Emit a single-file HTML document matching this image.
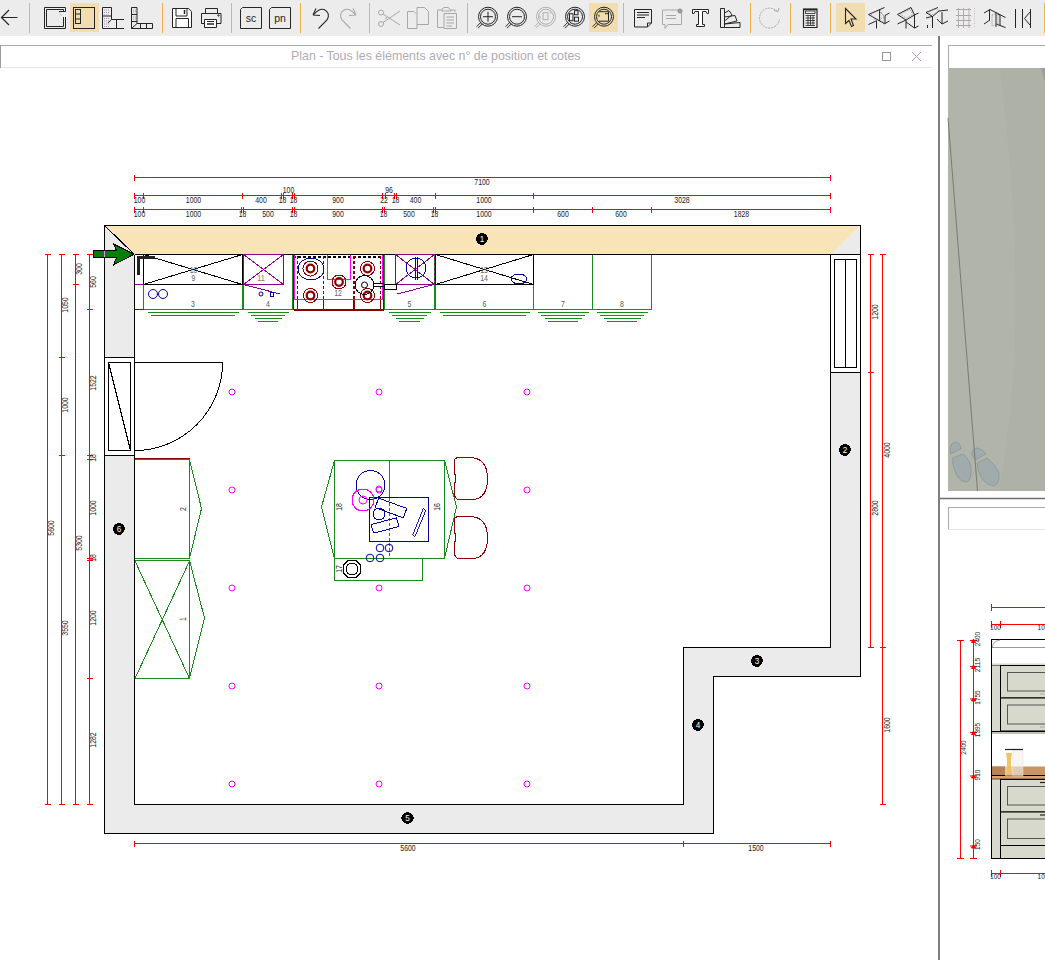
<!DOCTYPE html>
<html><head><meta charset="utf-8"><style>
html,body{margin:0;padding:0;background:#fff;width:1045px;height:960px;overflow:hidden}
svg{display:block;font-family:"Liberation Sans",sans-serif}
.ce line,.ce rect,.ce path,.ce polygon,.ce polyline,.ce circle,.ce ellipse{shape-rendering:crispEdges}
</style></head><body>
<svg width="1045" height="960" viewBox="0 0 1045 960">
<rect x="0" y="0" width="1045" height="36" fill="#ececec" stroke="none" stroke-width="1" />
<line x1="0" y1="36.5" x2="1045" y2="36.5" stroke="#a0a0a0" stroke-width="1" />
<line x1="29.5" y1="3" x2="29.5" y2="33" stroke="#f0b440" stroke-width="1" />
<line x1="162.5" y1="3" x2="162.5" y2="33" stroke="#f0b440" stroke-width="1" />
<line x1="231.5" y1="3" x2="231.5" y2="33" stroke="#f0b440" stroke-width="1" />
<line x1="300.5" y1="3" x2="300.5" y2="33" stroke="#f0b440" stroke-width="1" />
<line x1="369.5" y1="3" x2="369.5" y2="33" stroke="#f0b440" stroke-width="1" />
<line x1="467.5" y1="3" x2="467.5" y2="33" stroke="#f0b440" stroke-width="1" />
<line x1="623.5" y1="3" x2="623.5" y2="33" stroke="#f0b440" stroke-width="1" />
<line x1="750.5" y1="3" x2="750.5" y2="33" stroke="#f0b440" stroke-width="1" />
<line x1="790.5" y1="3" x2="790.5" y2="33" stroke="#f0b440" stroke-width="1" />
<line x1="830.5" y1="3" x2="830.5" y2="33" stroke="#f0b440" stroke-width="1" />
<line x1="1044.5" y1="3" x2="1044.5" y2="33" stroke="#f0b440" stroke-width="1" />
<rect x="70" y="3" width="29" height="29" fill="#f2ddb0" stroke="none" stroke-width="1" />
<rect x="589" y="3" width="29" height="29" fill="#f2ddb0" stroke="none" stroke-width="1" />
<rect x="836" y="3" width="29" height="29" fill="#f2ddb0" stroke="none" stroke-width="1" />
<path d="M17.5,17.5 L1.5,17.5 M9,10 L1.5,17.5 L9,25" fill="none" stroke="#252525" stroke-width="1.2" />
<path d="M44.5,7.5 L65.5,7.5 L65.5,11.5 L59,11.5 M46.5,26.5 L63.5,26.5 L63.5,17 M44.5,7.5 L44.5,28.5 L65.5,28.5 L65.5,17 M46.5,9.5 L63.5,9.5 L63.5,11 M46.5,9.5 L46.5,26.5" fill="none" stroke="#252525" stroke-width="1" />
<path d="M59,12.5 L62,16" fill="none" stroke="#c08050" stroke-width="0.8" stroke-dasharray="1,1"/>
<rect x="73.5" y="7.5" width="21" height="21" fill="none" stroke="#252525" stroke-width="1" />
<rect x="75.5" y="9.5" width="5" height="14" fill="none" stroke="#252525" stroke-width="1" />
<line x1="75.5" y1="14" x2="80.5" y2="14" stroke="#252525" stroke-width="1" />
<line x1="75.5" y1="19" x2="80.5" y2="19" stroke="#252525" stroke-width="1" />
<path d="M102.5,28.5 L102.5,7.5 L111.5,7.5 L111.5,19.5 L124,19.5 M102.5,16 L111.5,16 M102.5,28.5 L124,28.5 M116.5,19.5 L116.5,28.5 M108,23 L111.5,19.5" fill="none" stroke="#252525" stroke-width="1" />
<line x1="104" y1="10" x2="110" y2="10" stroke="#8a7a90" stroke-width="0.8" stroke-dasharray="1,1"/>
<line x1="104" y1="12.5" x2="110" y2="12.5" stroke="#8a7a90" stroke-width="0.8" stroke-dasharray="1,1"/>
<line x1="104" y1="15" x2="110" y2="15" stroke="#8a7a90" stroke-width="0.8" stroke-dasharray="1,1"/>
<line x1="104" y1="18.5" x2="110" y2="18.5" stroke="#8a7a90" stroke-width="0.8" stroke-dasharray="1,1"/>
<line x1="104" y1="21" x2="110" y2="21" stroke="#8a7a90" stroke-width="0.8" stroke-dasharray="1,1"/>
<line x1="104" y1="24" x2="110" y2="24" stroke="#8a7a90" stroke-width="0.8" stroke-dasharray="1,1"/>
<line x1="104" y1="26.5" x2="110" y2="26.5" stroke="#8a7a90" stroke-width="0.8" stroke-dasharray="1,1"/>
<path d="M131.5,28.5 L131.5,7.5 L137,7.5 L137,23.5 L152.5,23.5 L152.5,28.5 L131.5,28.5 M131.5,14.5 L137,14.5 M131.5,21.5 L137,21.5 M131.5,28.5 L137,23.5 M140.5,23.5 L140.5,28.5 M146.5,23.5 L146.5,28.5" fill="none" stroke="#252525" stroke-width="1" />
<line x1="133" y1="10" x2="136" y2="10" stroke="#8a7a90" stroke-width="0.8" stroke-dasharray="1,1"/>
<line x1="133" y1="12" x2="136" y2="12" stroke="#8a7a90" stroke-width="0.8" stroke-dasharray="1,1"/>
<line x1="133" y1="17" x2="136" y2="17" stroke="#8a7a90" stroke-width="0.8" stroke-dasharray="1,1"/>
<line x1="133" y1="19" x2="136" y2="19" stroke="#8a7a90" stroke-width="0.8" stroke-dasharray="1,1"/>
<path d="M172.5,8.5 L188.5,8.5 L191.5,11.5 L191.5,27.5 L172.5,27.5 Z" fill="#fff" stroke="#252525" stroke-width="1" />
<path d="M176,8.5 L176,16 L187,16 L187,8.5" fill="none" stroke="#252525" stroke-width="1" />
<path d="M184.5,10 L184.5,14" fill="none" stroke="#252525" stroke-width="1.5" />
<path d="M176,27.5 L176,18.5 L188.5,18.5 L188.5,27.5" fill="none" stroke="#252525" stroke-width="1" />
<path d="M205.5,13 L205.5,8.5 L217.5,8.5 L217.5,13" fill="none" stroke="#252525" stroke-width="1" />
<path d="M201.5,13.5 L221,13.5 L221,23.5 L216.5,23.5 M204.5,23.5 L201.5,23.5 Z" fill="none" stroke="#252525" stroke-width="1" />
<path d="M201.5,13.5 L201.5,23.5" fill="none" stroke="#252525" stroke-width="1" />
<path d="M204.5,19.5 L216.5,19.5 L216.5,27.5 L204.5,27.5 Z" fill="#fff" stroke="#252525" stroke-width="1" />
<line x1="207" y1="21.5" x2="214" y2="21.5" stroke="#252525" stroke-width="1" />
<line x1="207" y1="24" x2="214" y2="24" stroke="#252525" stroke-width="1.5" />
<circle cx="218.5" cy="15.5" r="0.7" fill="none" stroke="#252525" stroke-width="1"  style="shape-rendering:auto"/>
<path d="M242.5,7.5 L261.5,7.5 L261.5,28.5 L240.5,28.5 L240.5,9.5 Z" fill="none" stroke="#252525" stroke-width="1" />
<text x="251.0" y="22" text-anchor="middle" font-size="10.5" fill="#252525">sc</text>
<path d="M271.5,7.5 L290.5,7.5 L290.5,28.5 L269.5,28.5 L269.5,9.5 Z" fill="none" stroke="#252525" stroke-width="1" />
<text x="280.0" y="22" text-anchor="middle" font-size="10.5" fill="#252525">pn</text>
<path d="M313,15 L316,8.5 M313,15 L320,15.5" fill="none" stroke="#252525" stroke-width="1.1" />
<path d="M313.5,15 Q319,8 324,9.5 Q331,13 327,20 L318.5,28.5" fill="none" stroke="#252525" stroke-width="1.1" />
<path d="M356,15 L353,8.5 M356,15 L349,15.5" fill="none" stroke="#a8a8a8" stroke-width="1.1" />
<path d="M355.5,15 Q350,8 345,9.5 Q338,13 342,20 L350.5,28.5" fill="none" stroke="#a8a8a8" stroke-width="1.1" />
<circle cx="381" cy="12.5" r="2.5" fill="none" stroke="#a8a8a8" stroke-width="1"  style="shape-rendering:auto"/>
<circle cx="381" cy="24" r="2.5" fill="none" stroke="#a8a8a8" stroke-width="1"  style="shape-rendering:auto"/>
<path d="M383,14 L400,25 M383,22.5 L400,11 M386,17 L386,19" fill="none" stroke="#a8a8a8" stroke-width="1" />
<path d="M407.5,11.5 L414,11.5 L417,14.5 L417,28.5 L407.5,28.5 Z M417,14 L417,7.5 L424.5,7.5 L428.5,11.5 L428.5,24.5 L417,24.5" fill="none" stroke="#a8a8a8" stroke-width="1" />
<path d="M437.5,10 L442,10 M451,10 L455,10 L455,12 M437.5,10 L437.5,27.5 L444,27.5 M442,9 L444,7.5 L448,7.5 L450,9 L451,11 L442,11 Z" fill="none" stroke="#a8a8a8" stroke-width="1" />
<path d="M444,13.5 L456.5,13.5 L456.5,28.5 L444,28.5 Z M446.5,17 L454,17 M446.5,20 L454,20 M446.5,23 L454,23 M446.5,26 L452,26" fill="none" stroke="#a8a8a8" stroke-width="1" />
<circle cx="488" cy="16.7" r="9.5" fill="none" stroke="#252525" stroke-width="1" />
<circle cx="488" cy="16.7" r="7.5" fill="none" stroke="#252525" stroke-width="1" />
<path d="M476.5,26.7 L481,22.2 M478,28.2 L482.5,23.7" fill="none" stroke="#252525" stroke-width="1" />
<path d="M483,16.7 L493,16.7 M488,11.7 L488,21.7" fill="none" stroke="#252525" stroke-width="1" />
<circle cx="517" cy="16.7" r="9.5" fill="none" stroke="#252525" stroke-width="1" />
<circle cx="517" cy="16.7" r="7.5" fill="none" stroke="#252525" stroke-width="1" />
<path d="M505.5,26.7 L510,22.2 M507,28.2 L511.5,23.7" fill="none" stroke="#252525" stroke-width="1" />
<path d="M512,16.7 L522,16.7" fill="none" stroke="#252525" stroke-width="1" />
<circle cx="546" cy="16.7" r="9.5" fill="none" stroke="#b0b0b0" stroke-width="1" />
<circle cx="546" cy="16.7" r="7.5" fill="none" stroke="#b0b0b0" stroke-width="1" />
<path d="M534.5,26.7 L539,22.2 M536,28.2 L540.5,23.7" fill="none" stroke="#b0b0b0" stroke-width="1" />
<rect x="543" y="12.7" width="5" height="7" fill="none" stroke="#b0b0b0" stroke-width="1" />
<path d="M540,15.7 L540,18.7 M550,11.7 L552,13.7" fill="none" stroke="#b0b0b0" stroke-width="1" />
<circle cx="575" cy="16.7" r="9.5" fill="none" stroke="#252525" stroke-width="1" />
<circle cx="575" cy="16.7" r="7.5" fill="none" stroke="#252525" stroke-width="1" />
<path d="M563.5,26.7 L568,22.2 M565,28.2 L569.5,23.7" fill="none" stroke="#252525" stroke-width="1" />
<rect x="569.5" y="13.7" width="3.5" height="7" fill="none" stroke="#252525" stroke-width="1" />
<rect x="574.5" y="10.7" width="3.5" height="4" fill="none" stroke="#252525" stroke-width="1" />
<rect x="574.5" y="17.2" width="4" height="4" fill="none" stroke="#252525" stroke-width="1" />
<circle cx="604" cy="16.7" r="9.5" fill="none" stroke="#252525" stroke-width="1" />
<circle cx="604" cy="16.7" r="7.5" fill="none" stroke="#252525" stroke-width="1" />
<path d="M592.5,26.7 L597,22.2 M594,28.2 L598.5,23.7" fill="none" stroke="#252525" stroke-width="1" />
<path d="M599,11.7 L608.5,11.7 L608.5,21.2 L599,21.2 M599,14.7 L599,16.7 M605,13.7 L608,13.7" fill="none" stroke="#252525" stroke-width="1" />
<path d="M634.5,9.5 L651.5,9.5 L651.5,23 L647.5,27 L634.5,27 Z M647.5,27 L647.5,23 L651.5,23" fill="none" stroke="#252525" stroke-width="1" />
<path d="M637,12.5 L649,12.5 M637,15 L649,15 M637,17.5 L645,17.5" fill="none" stroke="#252525" stroke-width="1" />
<path d="M662.5,10 L681.5,10 L681.5,24.5 L668,24.5 L665,28.5 L665,24.5 L662.5,24.5 Z" fill="none" stroke="#a8a8a8" stroke-width="1" />
<line x1="666" y1="15.5" x2="676" y2="15.5" stroke="#a8a8a8" stroke-width="1" />
<line x1="666" y1="18.5" x2="676" y2="18.5" stroke="#a8a8a8" stroke-width="1" />
<circle cx="680" cy="11" r="2.5" fill="#9a9a9a" stroke="none" stroke-width="1"  style="shape-rendering:auto"/>
<path d="M692.5,9.5 L708.5,9.5 L708.5,13.5 L707,13.5 L706,11.5 L702.5,11.5 L702.5,24.5 L704.5,24.5 L704.5,26.5 L696.5,26.5 L696.5,24.5 L698.5,24.5 L698.5,11.5 L695,11.5 L694,13.5 L692.5,13.5 Z" fill="#fff" stroke="#252525" stroke-width="1" />
<path d="M720.5,8.5 L724.5,8.5 L724.5,27.5 L720.5,27.5 Z" fill="none" stroke="#252525" stroke-width="1" />
<path d="M724.5,13 L729,10.5 L732,15 L724.5,21 M724.5,17 L735,15.5 L737,21 L724.5,24 M724.5,24 L740,22.5 L740,27.5 L724.5,27.5" fill="none" stroke="#252525" stroke-width="1" />
<path d="M777.5,12 A10,10 0 1 0 779.5,19" fill="none" stroke="#a8a8a8" stroke-width="1" stroke-dasharray="2,1"/>
<path d="M774,10.5 L778,11.5 L779,8" fill="none" stroke="#a8a8a8" stroke-width="1" />
<path d="M803.5,9 L817,9 L817,27.5 L803.5,27.5 Z" fill="none" stroke="#252525" stroke-width="1.2" />
<line x1="803.5" y1="9.5" x2="817" y2="9.5" stroke="#252525" stroke-width="1.5" />
<rect x="805.5" y="11" width="9.5" height="2.5" fill="none" stroke="#252525" stroke-width="0.8" />
<path d="M805.5,15.5 L815,15.5 M805.5,18 L815,18 M805.5,20.5 L815,20.5 M805.5,23 L815,23 M805.5,25.5 L815,25.5 M808,15.5 L808,25.5 M810.5,15.5 L810.5,25.5 M813,15.5 L813,25.5" fill="none" stroke="#252525" stroke-width="0.8" />
<path d="M845.5,8.5 L856,19 L851,19 L853.5,25.5 L851.5,26.5 L849,20.5 L845.5,23.5 Z" fill="none" stroke="#252525" stroke-width="1.1" />
<path d="M868.5,14.5 L884.5,7.5 M868.5,14.5 L885,24 M879.5,9.5 L879.5,21 M885,15.5 L885,23.5 M885,15.5 L889.5,13 M885,23.5 L889.5,21 M868.5,24.5 L876,21 M876.5,20.5 L876.5,28.5" fill="none" stroke="#252525" stroke-width="1" />
<path d="M871,14 L880,10 L884,17 L876,21 Z M880,12 L884,16 L884,23 L880,20 Z" fill="none" stroke="#8a7a90" stroke-width="0.8" stroke-dasharray="1,1"/>
<path d="M897.5,14.5 L911,7.5 M897.5,14.5 L906,20 L914.5,15 M911,7.5 L914.5,15 M906,20 L906,28.5 M914.5,15 L914.5,28 M906,22 L914.5,28 M914.5,15 L918.5,13 M914.5,28 L918.5,26 M897.5,24 L906,20" fill="none" stroke="#252525" stroke-width="1" />
<path d="M900,14 L910,9.5 L913,14.5 L906,18 Z" fill="none" stroke="#8a7a90" stroke-width="0.8" stroke-dasharray="1,1"/>
<path d="M926,12.5 L938,7.5 M926,12.5 L932.5,16.5 L939,11 M932.5,16 L932.5,28 M926,18 L932,16.5 M939,11 L948,10 M942,12 L942,24 M937,19 L942,24 L948,21 M927.5,25 L927.5,28" fill="none" stroke="#252525" stroke-width="1" />
<path d="M928,12 L937,8.5 L939,11 L932,15 Z" fill="none" stroke="#8a7a90" stroke-width="0.8" stroke-dasharray="1,1"/>
<line x1="958.5" y1="8" x2="958.5" y2="28" stroke="#b8aab5" stroke-width="1" />
<line x1="963.5" y1="8" x2="963.5" y2="28" stroke="#b8aab5" stroke-width="1" />
<line x1="969" y1="8" x2="969" y2="28" stroke="#b8aab5" stroke-width="1" />
<line x1="956" y1="9.5" x2="971" y2="9.5" stroke="#a8a8a8" stroke-width="1" />
<line x1="956" y1="15.5" x2="971" y2="15.5" stroke="#a8a8a8" stroke-width="1" />
<line x1="956" y1="20.5" x2="971" y2="20.5" stroke="#a8a8a8" stroke-width="1" />
<line x1="956" y1="25.5" x2="971" y2="25.5" stroke="#a8a8a8" stroke-width="1" />
<line x1="974.5" y1="8" x2="974.5" y2="28" stroke="#c8b8c0" stroke-width="1" stroke-dasharray="1,1.5"/>
<path d="M984,13 L990,9.5 L1005.5,17.5 M984,24 L990,20 M989.5,9.5 L989.5,20 M996,12.5 L996,27 M996,24 L1005.5,27.5 M996,13 L1000,15 L1000,26" fill="none" stroke="#252525" stroke-width="1" />
<path d="M992,15 L998,13 L998,24 L992,26 Z" fill="none" stroke="#8a7a90" stroke-width="0.8" stroke-dasharray="1,1"/>
<path d="M1015.5,9 L1015.5,28 M1022.5,9 L1022.5,28 M1030.5,9 L1030.5,28 M1030,12 L1024.5,18.5 L1030,25" fill="none" stroke="#252525" stroke-width="1" />
<rect x="0" y="36" width="939" height="924" fill="#fff" stroke="none" stroke-width="1" />
<line x1="0" y1="45.5" x2="932" y2="45.5" stroke="#ababab" stroke-width="1" />
<line x1="0" y1="67.5" x2="932" y2="67.5" stroke="#e6e6e6" stroke-width="1" />
<line x1="0.5" y1="45" x2="0.5" y2="68" stroke="#9a9a9a" stroke-width="1" />
<text x="291" y="60" font-size="12.2" fill="#b0abb3" textLength="289.5" lengthAdjust="spacingAndGlyphs">Plan - Tous les éléments avec n° de position et cotes</text>
<rect x="882.5" y="52.5" width="8" height="8" fill="none" stroke="#999" stroke-width="1" />
<line x1="912" y1="52" x2="921" y2="61" stroke="#a99ab0" stroke-width="1" />
<line x1="921" y1="52" x2="912" y2="61" stroke="#a99ab0" stroke-width="1" />
<rect x="939" y="36" width="106" height="924" fill="#fff" stroke="none" stroke-width="1" />
<line x1="939" y1="36" x2="939" y2="960" stroke="#707070" stroke-width="1.8" />
<line x1="940" y1="498.5" x2="1045" y2="498.5" stroke="#6e6e6e" stroke-width="1.5" />
<line x1="948.5" y1="45.5" x2="1045" y2="45.5" stroke="#ababab" stroke-width="1" />
<line x1="948.5" y1="45" x2="948.5" y2="68" stroke="#ababab" stroke-width="1" />
<line x1="948.5" y1="507.5" x2="1045" y2="507.5" stroke="#ababab" stroke-width="1" />
<line x1="948.5" y1="507" x2="948.5" y2="530" stroke="#ababab" stroke-width="1" />
<line x1="948.5" y1="529.5" x2="1045" y2="529.5" stroke="#e6e6e6" stroke-width="1" />
<g class="ce">
<path d="M104.5,225.5 L860.5,225.5 L860.5,676.5 L713.5,676.5 L713.5,833.5 L104.5,833.5 Z M134.5,254.5 L830.5,254.5 L830.5,647.5 L683.5,647.5 L683.5,804.5 L134.5,804.5 Z" fill="#ebebeb" fill-rule="evenodd" stroke="#000" stroke-width="1"/>
<polygon points="104.5,225.5 860.5,225.5 830.5,254.5 134.5,254.5" fill="#f9e4b8" stroke="none" stroke-width="1" />
<line x1="104.5" y1="225.5" x2="860.5" y2="225.5" stroke="#000" stroke-width="1" />
<line x1="134.5" y1="254.5" x2="830.5" y2="254.5" stroke="#000" stroke-width="1" />
<line x1="104.5" y1="225.5" x2="134.5" y2="254.5" stroke="#000" stroke-width="1" />
<rect x="830.5" y="254.5" width="30" height="118" fill="#fff" stroke="#000" stroke-width="1" />
<rect x="834.5" y="259.5" width="22" height="108" fill="none" stroke="#000" stroke-width="1" />
<line x1="845.5" y1="259.5" x2="845.5" y2="367.5" stroke="#000" stroke-width="1" />
<rect x="104.5" y="357.5" width="30" height="98" fill="#fff" stroke="#000" stroke-width="1" />
<rect x="108.5" y="362.5" width="22" height="88" fill="none" stroke="#000" stroke-width="1" />
<line x1="108.5" y1="362.5" x2="130.5" y2="450.5" stroke="#000" stroke-width="1" />
<path d="M134.5,362.5 L222.5,362.5 A88,88 0 0 1 134.5,450.5" fill="none" stroke="#000" stroke-width="1"/>
<circle cx="482" cy="239" r="5.8" fill="#000" stroke="none" stroke-width="1" />
<path d="M480.8,232.9 h2.4 v12.2 h-2.4 Z M475.9,237.8 v2.4 h12.2 v-2.4 Z" fill="#000"/>
<text x="482" y="241.9" text-anchor="middle" font-size="8.2" fill="#fff">1</text>
<circle cx="845" cy="450" r="5.8" fill="#000" stroke="none" stroke-width="1" />
<path d="M843.8,443.9 h2.4 v12.2 h-2.4 Z M838.9,448.8 v2.4 h12.2 v-2.4 Z" fill="#000"/>
<text x="845" y="452.9" text-anchor="middle" font-size="8.2" fill="#fff">2</text>
<circle cx="757" cy="661" r="5.8" fill="#000" stroke="none" stroke-width="1" />
<path d="M755.8,654.9 h2.4 v12.2 h-2.4 Z M750.9,659.8 v2.4 h12.2 v-2.4 Z" fill="#000"/>
<text x="757" y="663.9" text-anchor="middle" font-size="8.2" fill="#fff">3</text>
<circle cx="698" cy="725" r="5.8" fill="#000" stroke="none" stroke-width="1" />
<path d="M696.8,718.9 h2.4 v12.2 h-2.4 Z M691.9,723.8 v2.4 h12.2 v-2.4 Z" fill="#000"/>
<text x="698" y="727.9" text-anchor="middle" font-size="8.2" fill="#fff">4</text>
<circle cx="407.5" cy="818" r="5.8" fill="#000" stroke="none" stroke-width="1" />
<path d="M406.3,811.9 h2.4 v12.2 h-2.4 Z M401.4,816.8 v2.4 h12.2 v-2.4 Z" fill="#000"/>
<text x="407.5" y="820.9" text-anchor="middle" font-size="8.2" fill="#fff">5</text>
<circle cx="119" cy="529" r="5.8" fill="#000" stroke="none" stroke-width="1" />
<path d="M117.8,522.9 h2.4 v12.2 h-2.4 Z M112.9,527.8 v2.4 h12.2 v-2.4 Z" fill="#000"/>
<text x="119" y="531.9" text-anchor="middle" font-size="8.2" fill="#fff">6</text>
<line x1="134.5" y1="177.5" x2="830.5" y2="177.5" stroke="#f00" stroke-width="1" />
<line x1="134.5" y1="174.5" x2="134.5" y2="180.5" stroke="#f00" stroke-width="1" />
<line x1="830.5" y1="174.5" x2="830.5" y2="180.5" stroke="#f00" stroke-width="1" />
<text x="482" y="182" text-anchor="middle" dominant-baseline="central" font-size="8.6" fill="#222" textLength="15.4" lengthAdjust="spacingAndGlyphs">7100</text>
<line x1="134.5" y1="195.5" x2="830.5" y2="195.5" stroke="#f00" stroke-width="1" />
<line x1="134.5" y1="192.5" x2="134.5" y2="198.5" stroke="#f00" stroke-width="1" />
<line x1="143.5" y1="192.5" x2="143.5" y2="198.5" stroke="#f00" stroke-width="1" />
<line x1="242.5" y1="192.5" x2="242.5" y2="198.5" stroke="#f00" stroke-width="1" />
<line x1="281.5" y1="192.5" x2="281.5" y2="198.5" stroke="#f00" stroke-width="1" />
<line x1="283.5" y1="192.5" x2="283.5" y2="198.5" stroke="#f00" stroke-width="1" />
<line x1="292.5" y1="192.5" x2="292.5" y2="198.5" stroke="#f00" stroke-width="1" />
<line x1="294.5" y1="192.5" x2="294.5" y2="198.5" stroke="#f00" stroke-width="1" />
<line x1="382.5" y1="192.5" x2="382.5" y2="198.5" stroke="#f00" stroke-width="1" />
<line x1="385.5" y1="192.5" x2="385.5" y2="198.5" stroke="#f00" stroke-width="1" />
<line x1="394.5" y1="192.5" x2="394.5" y2="198.5" stroke="#f00" stroke-width="1" />
<line x1="396.5" y1="192.5" x2="396.5" y2="198.5" stroke="#f00" stroke-width="1" />
<line x1="435.5" y1="192.5" x2="435.5" y2="198.5" stroke="#f00" stroke-width="1" />
<line x1="533.5" y1="192.5" x2="533.5" y2="198.5" stroke="#f00" stroke-width="1" />
<line x1="830.5" y1="192.5" x2="830.5" y2="198.5" stroke="#f00" stroke-width="1" />
<text x="139.5" y="199.8" text-anchor="middle" dominant-baseline="central" font-size="8.6" fill="#222" textLength="11.55" lengthAdjust="spacingAndGlyphs">100</text>
<text x="193.5" y="199.8" text-anchor="middle" dominant-baseline="central" font-size="8.6" fill="#222" textLength="15.4" lengthAdjust="spacingAndGlyphs">1000</text>
<text x="261" y="199.8" text-anchor="middle" dominant-baseline="central" font-size="8.6" fill="#222" textLength="11.55" lengthAdjust="spacingAndGlyphs">400</text>
<text x="282.5" y="199.8" text-anchor="middle" dominant-baseline="central" font-size="8.6" fill="#222" textLength="7.7" lengthAdjust="spacingAndGlyphs">18</text>
<text x="293.5" y="199.8" text-anchor="middle" dominant-baseline="central" font-size="8.6" fill="#222" textLength="7.7" lengthAdjust="spacingAndGlyphs">18</text>
<text x="338" y="199.8" text-anchor="middle" dominant-baseline="central" font-size="8.6" fill="#222" textLength="11.55" lengthAdjust="spacingAndGlyphs">900</text>
<text x="384" y="199.8" text-anchor="middle" dominant-baseline="central" font-size="8.6" fill="#222" textLength="7.7" lengthAdjust="spacingAndGlyphs">22</text>
<text x="395.5" y="199.8" text-anchor="middle" dominant-baseline="central" font-size="8.6" fill="#222" textLength="7.7" lengthAdjust="spacingAndGlyphs">18</text>
<text x="415.5" y="199.8" text-anchor="middle" dominant-baseline="central" font-size="8.6" fill="#222" textLength="11.55" lengthAdjust="spacingAndGlyphs">400</text>
<text x="484" y="199.8" text-anchor="middle" dominant-baseline="central" font-size="8.6" fill="#222" textLength="15.4" lengthAdjust="spacingAndGlyphs">1000</text>
<text x="682" y="199.8" text-anchor="middle" dominant-baseline="central" font-size="8.6" fill="#222" textLength="15.4" lengthAdjust="spacingAndGlyphs">3028</text>
<text x="288.5" y="190" text-anchor="middle" dominant-baseline="central" font-size="8.6" fill="#222" textLength="11.55" lengthAdjust="spacingAndGlyphs">100</text>
<text x="389" y="190" text-anchor="middle" dominant-baseline="central" font-size="8.6" fill="#222" textLength="7.7" lengthAdjust="spacingAndGlyphs">96</text>
<line x1="134.5" y1="209.5" x2="830.5" y2="209.5" stroke="#f00" stroke-width="1" />
<line x1="134.5" y1="206.5" x2="134.5" y2="212.5" stroke="#f00" stroke-width="1" />
<line x1="143.5" y1="206.5" x2="143.5" y2="212.5" stroke="#f00" stroke-width="1" />
<line x1="241.5" y1="206.5" x2="241.5" y2="212.5" stroke="#f00" stroke-width="1" />
<line x1="243.5" y1="206.5" x2="243.5" y2="212.5" stroke="#f00" stroke-width="1" />
<line x1="292.5" y1="206.5" x2="292.5" y2="212.5" stroke="#f00" stroke-width="1" />
<line x1="294.5" y1="206.5" x2="294.5" y2="212.5" stroke="#f00" stroke-width="1" />
<line x1="382.5" y1="206.5" x2="382.5" y2="212.5" stroke="#f00" stroke-width="1" />
<line x1="384.5" y1="206.5" x2="384.5" y2="212.5" stroke="#f00" stroke-width="1" />
<line x1="433.5" y1="206.5" x2="433.5" y2="212.5" stroke="#f00" stroke-width="1" />
<line x1="435.5" y1="206.5" x2="435.5" y2="212.5" stroke="#f00" stroke-width="1" />
<line x1="533.5" y1="206.5" x2="533.5" y2="212.5" stroke="#f00" stroke-width="1" />
<line x1="592.5" y1="206.5" x2="592.5" y2="212.5" stroke="#f00" stroke-width="1" />
<line x1="651.5" y1="206.5" x2="651.5" y2="212.5" stroke="#f00" stroke-width="1" />
<line x1="830.5" y1="206.5" x2="830.5" y2="212.5" stroke="#f00" stroke-width="1" />
<text x="139.5" y="213.8" text-anchor="middle" dominant-baseline="central" font-size="8.6" fill="#222" textLength="11.55" lengthAdjust="spacingAndGlyphs">100</text>
<text x="193.5" y="213.8" text-anchor="middle" dominant-baseline="central" font-size="8.6" fill="#222" textLength="15.4" lengthAdjust="spacingAndGlyphs">1000</text>
<text x="242.5" y="213.8" text-anchor="middle" dominant-baseline="central" font-size="8.6" fill="#222" textLength="7.7" lengthAdjust="spacingAndGlyphs">18</text>
<text x="268" y="213.8" text-anchor="middle" dominant-baseline="central" font-size="8.6" fill="#222" textLength="11.55" lengthAdjust="spacingAndGlyphs">500</text>
<text x="293.5" y="213.8" text-anchor="middle" dominant-baseline="central" font-size="8.6" fill="#222" textLength="7.7" lengthAdjust="spacingAndGlyphs">18</text>
<text x="338" y="213.8" text-anchor="middle" dominant-baseline="central" font-size="8.6" fill="#222" textLength="11.55" lengthAdjust="spacingAndGlyphs">900</text>
<text x="383.5" y="213.8" text-anchor="middle" dominant-baseline="central" font-size="8.6" fill="#222" textLength="7.7" lengthAdjust="spacingAndGlyphs">18</text>
<text x="409" y="213.8" text-anchor="middle" dominant-baseline="central" font-size="8.6" fill="#222" textLength="11.55" lengthAdjust="spacingAndGlyphs">500</text>
<text x="434.5" y="213.8" text-anchor="middle" dominant-baseline="central" font-size="8.6" fill="#222" textLength="7.7" lengthAdjust="spacingAndGlyphs">18</text>
<text x="484" y="213.8" text-anchor="middle" dominant-baseline="central" font-size="8.6" fill="#222" textLength="15.4" lengthAdjust="spacingAndGlyphs">1000</text>
<text x="563" y="213.8" text-anchor="middle" dominant-baseline="central" font-size="8.6" fill="#222" textLength="11.55" lengthAdjust="spacingAndGlyphs">600</text>
<text x="621" y="213.8" text-anchor="middle" dominant-baseline="central" font-size="8.6" fill="#222" textLength="11.55" lengthAdjust="spacingAndGlyphs">600</text>
<text x="741.5" y="213.8" text-anchor="middle" dominant-baseline="central" font-size="8.6" fill="#222" textLength="15.4" lengthAdjust="spacingAndGlyphs">1828</text>
<line x1="134.5" y1="843.5" x2="830.5" y2="843.5" stroke="#f00" stroke-width="1" />
<line x1="134.5" y1="840.5" x2="134.5" y2="846.5" stroke="#f00" stroke-width="1" />
<line x1="683.5" y1="840.5" x2="683.5" y2="846.5" stroke="#f00" stroke-width="1" />
<line x1="830.5" y1="840.5" x2="830.5" y2="846.5" stroke="#f00" stroke-width="1" />
<text x="408" y="848" text-anchor="middle" dominant-baseline="central" font-size="8.6" fill="#222" textLength="15.4" lengthAdjust="spacingAndGlyphs">5600</text>
<text x="756" y="848" text-anchor="middle" dominant-baseline="central" font-size="8.6" fill="#222" textLength="15.4" lengthAdjust="spacingAndGlyphs">1500</text>
<line x1="870.5" y1="254.5" x2="870.5" y2="647.5" stroke="#f00" stroke-width="1" />
<line x1="867.5" y1="254.5" x2="873.5" y2="254.5" stroke="#f00" stroke-width="1" />
<line x1="867.5" y1="372.5" x2="873.5" y2="372.5" stroke="#f00" stroke-width="1" />
<line x1="867.5" y1="647.5" x2="873.5" y2="647.5" stroke="#f00" stroke-width="1" />
<line x1="882.5" y1="254.5" x2="882.5" y2="804.5" stroke="#f00" stroke-width="1" />
<line x1="879.5" y1="254.5" x2="885.5" y2="254.5" stroke="#f00" stroke-width="1" />
<line x1="879.5" y1="647.5" x2="885.5" y2="647.5" stroke="#f00" stroke-width="1" />
<line x1="879.5" y1="804.5" x2="885.5" y2="804.5" stroke="#f00" stroke-width="1" />
<text x="0" y="0" transform="translate(875.4,312) rotate(-90)" text-anchor="middle" dominant-baseline="central" font-size="8.6" fill="#222" textLength="15.4" lengthAdjust="spacingAndGlyphs">1200</text>
<text x="0" y="0" transform="translate(875.4,508) rotate(-90)" text-anchor="middle" dominant-baseline="central" font-size="8.6" fill="#222" textLength="15.4" lengthAdjust="spacingAndGlyphs">2800</text>
<text x="0" y="0" transform="translate(887.4,450) rotate(-90)" text-anchor="middle" dominant-baseline="central" font-size="8.6" fill="#222" textLength="15.4" lengthAdjust="spacingAndGlyphs">4000</text>
<text x="0" y="0" transform="translate(887.4,725) rotate(-90)" text-anchor="middle" dominant-baseline="central" font-size="8.6" fill="#222" textLength="15.4" lengthAdjust="spacingAndGlyphs">1600</text>
<line x1="47.5" y1="254.5" x2="47.5" y2="804.5" stroke="#f00" stroke-width="1" />
<line x1="44.5" y1="254.5" x2="50.5" y2="254.5" stroke="#f00" stroke-width="1" />
<line x1="44.5" y1="804.5" x2="50.5" y2="804.5" stroke="#f00" stroke-width="1" />
<line x1="61.5" y1="254.5" x2="61.5" y2="804.5" stroke="#f00" stroke-width="1" />
<line x1="58.5" y1="254.5" x2="64.5" y2="254.5" stroke="#f00" stroke-width="1" />
<line x1="58.5" y1="357.5" x2="64.5" y2="357.5" stroke="#f00" stroke-width="1" />
<line x1="58.5" y1="455.5" x2="64.5" y2="455.5" stroke="#f00" stroke-width="1" />
<line x1="58.5" y1="804.5" x2="64.5" y2="804.5" stroke="#f00" stroke-width="1" />
<line x1="75.5" y1="254.5" x2="75.5" y2="804.5" stroke="#f00" stroke-width="1" />
<line x1="72.5" y1="254.5" x2="78.5" y2="254.5" stroke="#f00" stroke-width="1" />
<line x1="72.5" y1="284.5" x2="78.5" y2="284.5" stroke="#f00" stroke-width="1" />
<line x1="72.5" y1="804.5" x2="78.5" y2="804.5" stroke="#f00" stroke-width="1" />
<line x1="89.5" y1="254.5" x2="89.5" y2="804.5" stroke="#f00" stroke-width="1" />
<line x1="86.5" y1="254.5" x2="92.5" y2="254.5" stroke="#f00" stroke-width="1" />
<line x1="86.5" y1="309.5" x2="92.5" y2="309.5" stroke="#f00" stroke-width="1" />
<line x1="86.5" y1="455.5" x2="92.5" y2="455.5" stroke="#f00" stroke-width="1" />
<line x1="86.5" y1="459.5" x2="92.5" y2="459.5" stroke="#f00" stroke-width="1" />
<line x1="86.5" y1="558.5" x2="92.5" y2="558.5" stroke="#f00" stroke-width="1" />
<line x1="86.5" y1="560.5" x2="92.5" y2="560.5" stroke="#f00" stroke-width="1" />
<line x1="86.5" y1="678.5" x2="92.5" y2="678.5" stroke="#f00" stroke-width="1" />
<line x1="86.5" y1="804.5" x2="92.5" y2="804.5" stroke="#f00" stroke-width="1" />
<text x="0" y="0" transform="translate(51.4,528) rotate(-90)" text-anchor="middle" dominant-baseline="central" font-size="8.6" fill="#222" textLength="15.4" lengthAdjust="spacingAndGlyphs">5600</text>
<text x="0" y="0" transform="translate(65.4,305) rotate(-90)" text-anchor="middle" dominant-baseline="central" font-size="8.6" fill="#222" textLength="15.4" lengthAdjust="spacingAndGlyphs">1050</text>
<text x="0" y="0" transform="translate(65.4,405) rotate(-90)" text-anchor="middle" dominant-baseline="central" font-size="8.6" fill="#222" textLength="15.4" lengthAdjust="spacingAndGlyphs">1000</text>
<text x="0" y="0" transform="translate(65.4,628) rotate(-90)" text-anchor="middle" dominant-baseline="central" font-size="8.6" fill="#222" textLength="15.4" lengthAdjust="spacingAndGlyphs">3550</text>
<text x="0" y="0" transform="translate(79.4,269) rotate(-90)" text-anchor="middle" dominant-baseline="central" font-size="8.6" fill="#222" textLength="11.55" lengthAdjust="spacingAndGlyphs">300</text>
<text x="0" y="0" transform="translate(79.4,543) rotate(-90)" text-anchor="middle" dominant-baseline="central" font-size="8.6" fill="#222" textLength="15.4" lengthAdjust="spacingAndGlyphs">5300</text>
<text x="0" y="0" transform="translate(93.4,282) rotate(-90)" text-anchor="middle" dominant-baseline="central" font-size="8.6" fill="#222" textLength="11.55" lengthAdjust="spacingAndGlyphs">560</text>
<text x="0" y="0" transform="translate(93.4,383) rotate(-90)" text-anchor="middle" dominant-baseline="central" font-size="8.6" fill="#222" textLength="15.4" lengthAdjust="spacingAndGlyphs">1522</text>
<text x="0" y="0" transform="translate(93.4,458) rotate(-90)" text-anchor="middle" dominant-baseline="central" font-size="8.6" fill="#222" textLength="7.7" lengthAdjust="spacingAndGlyphs">18</text>
<text x="0" y="0" transform="translate(93.4,508) rotate(-90)" text-anchor="middle" dominant-baseline="central" font-size="8.6" fill="#222" textLength="15.4" lengthAdjust="spacingAndGlyphs">1000</text>
<text x="0" y="0" transform="translate(93.4,558) rotate(-90)" text-anchor="middle" dominant-baseline="central" font-size="8.6" fill="#222" textLength="7.7" lengthAdjust="spacingAndGlyphs">18</text>
<text x="0" y="0" transform="translate(93.4,618) rotate(-90)" text-anchor="middle" dominant-baseline="central" font-size="8.6" fill="#222" textLength="15.4" lengthAdjust="spacingAndGlyphs">1200</text>
<text x="0" y="0" transform="translate(93.4,740) rotate(-90)" text-anchor="middle" dominant-baseline="central" font-size="8.6" fill="#222" textLength="15.4" lengthAdjust="spacingAndGlyphs">1282</text>
<polyline points="143.5,254.5 143.5,309.5 242.5,309.5 242.5,254.5" fill="none" stroke="#1a8a1a" stroke-width="1" />
<text x="193.0" y="303.5" text-anchor="middle" dominant-baseline="central" font-size="8.6" fill="#555" textLength="3.85" lengthAdjust="spacingAndGlyphs">3</text>
<polyline points="243.5,254.5 243.5,309.5 292.5,309.5 292.5,254.5" fill="none" stroke="#1a8a1a" stroke-width="1" />
<text x="268.0" y="303.5" text-anchor="middle" dominant-baseline="central" font-size="8.6" fill="#555" textLength="3.85" lengthAdjust="spacingAndGlyphs">4</text>
<polyline points="384.5,254.5 384.5,309.5 434.5,309.5 434.5,254.5" fill="none" stroke="#1a8a1a" stroke-width="1" />
<text x="409.5" y="303.5" text-anchor="middle" dominant-baseline="central" font-size="8.6" fill="#555" textLength="3.85" lengthAdjust="spacingAndGlyphs">5</text>
<polyline points="435.5,254.5 435.5,309.5 533.5,309.5 533.5,254.5" fill="none" stroke="#1a8a1a" stroke-width="1" />
<text x="484.5" y="303.5" text-anchor="middle" dominant-baseline="central" font-size="8.6" fill="#555" textLength="3.85" lengthAdjust="spacingAndGlyphs">6</text>
<polyline points="533.5,254.5 533.5,309.5 592.5,309.5 592.5,254.5" fill="none" stroke="#1a8a1a" stroke-width="1" />
<text x="563.0" y="303.5" text-anchor="middle" dominant-baseline="central" font-size="8.6" fill="#555" textLength="3.85" lengthAdjust="spacingAndGlyphs">7</text>
<polyline points="592.5,254.5 592.5,309.5 651.5,309.5 651.5,254.5" fill="none" stroke="#1a8a1a" stroke-width="1" />
<text x="622.0" y="303.5" text-anchor="middle" dominant-baseline="central" font-size="8.6" fill="#555" textLength="3.85" lengthAdjust="spacingAndGlyphs">8</text>
<line x1="147.5" y1="312.5" x2="238.5" y2="312.5" stroke="#1a8a1a" stroke-width="1" />
<line x1="151.0" y1="315.5" x2="235.0" y2="315.5" stroke="#1a8a1a" stroke-width="1" />
<line x1="247.5" y1="312.5" x2="288.5" y2="312.5" stroke="#1a8a1a" stroke-width="1" />
<line x1="251.0" y1="315.5" x2="285.0" y2="315.5" stroke="#1a8a1a" stroke-width="1" />
<line x1="254.5" y1="318.5" x2="281.5" y2="318.5" stroke="#1a8a1a" stroke-width="1" />
<line x1="258.0" y1="321.5" x2="278.0" y2="321.5" stroke="#1a8a1a" stroke-width="1" />
<line x1="388.5" y1="312.5" x2="430.5" y2="312.5" stroke="#1a8a1a" stroke-width="1" />
<line x1="392.0" y1="315.5" x2="427.0" y2="315.5" stroke="#1a8a1a" stroke-width="1" />
<line x1="395.5" y1="318.5" x2="423.5" y2="318.5" stroke="#1a8a1a" stroke-width="1" />
<line x1="399.0" y1="321.5" x2="420.0" y2="321.5" stroke="#1a8a1a" stroke-width="1" />
<line x1="439.5" y1="312.5" x2="529.5" y2="312.5" stroke="#1a8a1a" stroke-width="1" />
<line x1="443.0" y1="315.5" x2="526.0" y2="315.5" stroke="#1a8a1a" stroke-width="1" />
<line x1="537.5" y1="312.5" x2="588.5" y2="312.5" stroke="#1a8a1a" stroke-width="1" />
<line x1="541.0" y1="315.5" x2="585.0" y2="315.5" stroke="#1a8a1a" stroke-width="1" />
<line x1="544.5" y1="318.5" x2="581.5" y2="318.5" stroke="#1a8a1a" stroke-width="1" />
<line x1="548.0" y1="321.5" x2="578.0" y2="321.5" stroke="#1a8a1a" stroke-width="1" />
<line x1="596.5" y1="312.5" x2="647.5" y2="312.5" stroke="#1a8a1a" stroke-width="1" />
<line x1="600.0" y1="315.5" x2="644.0" y2="315.5" stroke="#1a8a1a" stroke-width="1" />
<line x1="603.5" y1="318.5" x2="640.5" y2="318.5" stroke="#1a8a1a" stroke-width="1" />
<line x1="607.0" y1="321.5" x2="637.0" y2="321.5" stroke="#1a8a1a" stroke-width="1" />
<line x1="134.5" y1="309.5" x2="143.5" y2="309.5" stroke="#8b0000" stroke-width="1" />
<line x1="134.5" y1="284.5" x2="143.5" y2="284.5" stroke="#8b008b" stroke-width="1" />
<rect x="143.5" y="254.5" width="99" height="30" fill="none" stroke="#000" stroke-width="1" />
<line x1="143.5" y1="284.5" x2="242.5" y2="254.5" stroke="#000" stroke-width="1" />
<line x1="143.5" y1="254.5" x2="242.5" y2="284.5" stroke="#000" stroke-width="1" />
<text x="193.5" y="270" text-anchor="middle" dominant-baseline="central" font-size="8.6" fill="#666" textLength="7.7" lengthAdjust="spacingAndGlyphs">18</text>
<text x="193.5" y="278" text-anchor="middle" dominant-baseline="central" font-size="8.6" fill="#666" textLength="3.85" lengthAdjust="spacingAndGlyphs">9</text>
<polyline points="138,275 138,257.5 155,257.5" fill="none" stroke="#222" stroke-width="3" />
<circle cx="153" cy="294" r="4.5" fill="none" stroke="#00009a" stroke-width="1"  style="shape-rendering:auto"/>
<circle cx="163" cy="294" r="4.5" fill="none" stroke="#00009a" stroke-width="1"  style="shape-rendering:auto"/>
<rect x="243.5" y="254.5" width="40" height="30" fill="none" stroke="#8b008b" stroke-width="1" />
<line x1="243.5" y1="284.5" x2="283.5" y2="254.5" stroke="#8b008b" stroke-width="1" />
<line x1="243.5" y1="254.5" x2="283.5" y2="284.5" stroke="#8b008b" stroke-width="1" />
<text x="261" y="278" text-anchor="middle" dominant-baseline="central" font-size="8.6" fill="#a07050" textLength="7.7" lengthAdjust="spacingAndGlyphs">11</text>
<line x1="243.5" y1="284.5" x2="280" y2="294" stroke="#8b008b" stroke-width="1" />
<circle cx="261" cy="294" r="2" fill="none" stroke="#00009a" stroke-width="1"  style="shape-rendering:auto"/>
<rect x="270" y="292.5" width="3.5" height="3.5" fill="none" stroke="#00009a" stroke-width="1" />
<rect x="293.5" y="254.5" width="90" height="55" fill="none" stroke="#8b0000" stroke-width="1" />
<rect x="293.5" y="254.5" width="90" height="55" fill="none" stroke="#8b0000" stroke-width="1"/>
<line x1="293" y1="257" x2="383" y2="257" stroke="#000" stroke-width="2" stroke-dasharray="3,2"/>
<line x1="297.5" y1="256" x2="297.5" y2="299" stroke="#8b0000" stroke-width="1" stroke-dasharray="3,2"/>
<line x1="297.5" y1="299" x2="297.5" y2="309" stroke="#8b0000" stroke-width="1" />
<line x1="323.5" y1="256" x2="323.5" y2="299" stroke="#8b0000" stroke-width="1" stroke-dasharray="3,2"/>
<line x1="323.5" y1="299" x2="323.5" y2="309" stroke="#8b0000" stroke-width="1" />
<line x1="380.5" y1="256" x2="380.5" y2="299" stroke="#8b0000" stroke-width="1" stroke-dasharray="3,2"/>
<line x1="380.5" y1="299" x2="380.5" y2="309" stroke="#8b0000" stroke-width="1" />
<line x1="354" y1="256" x2="354" y2="299" stroke="#8b0000" stroke-width="2" stroke-dasharray="3,2"/>
<line x1="354" y1="299" x2="354" y2="309" stroke="#8b0000" stroke-width="2" />
<rect x="294.5" y="254.5" width="88" height="45" fill="none" stroke="#ff00ff" stroke-width="1" />
<rect x="327.5" y="254.5" width="23" height="25" fill="none" stroke="#ff00ff" stroke-width="1" />
<line x1="293.5" y1="309.5" x2="383.5" y2="309.5" stroke="#8b0000" stroke-width="2" />
<circle cx="310.5" cy="268.5" r="7.5" fill="none" stroke="#8b0000" stroke-width="1" />
<circle cx="310.5" cy="268.5" r="3.8" fill="none" stroke="#8b0000" stroke-width="2.2"  style="shape-rendering:auto"/>
<circle cx="310.5" cy="295.5" r="7" fill="none" stroke="#8b0000" stroke-width="1" />
<circle cx="310.5" cy="295.5" r="3.8" fill="none" stroke="#8b0000" stroke-width="2.2"  style="shape-rendering:auto"/>
<circle cx="339" cy="282" r="7" fill="none" stroke="#8b0000" stroke-width="1" />
<circle cx="339" cy="282" r="3.8" fill="none" stroke="#8b0000" stroke-width="2.2"  style="shape-rendering:auto"/>
<circle cx="367.5" cy="268.5" r="7" fill="none" stroke="#8b0000" stroke-width="1" />
<circle cx="367.5" cy="268.5" r="3.8" fill="none" stroke="#8b0000" stroke-width="2.2"  style="shape-rendering:auto"/>
<circle cx="367.5" cy="295.5" r="7" fill="none" stroke="#8b0000" stroke-width="1" />
<circle cx="367.5" cy="295.5" r="3.8" fill="none" stroke="#8b0000" stroke-width="2.2"  style="shape-rendering:auto"/>
<ellipse cx="311" cy="269" rx="13" ry="10.8" fill="none" stroke="#00009a"/>
<circle cx="364.5" cy="285" r="9.5" fill="none" stroke="#000" stroke-width="1" />
<circle cx="364.5" cy="285" r="3" fill="none" stroke="#000" stroke-width="1"  style="shape-rendering:auto"/>
<line x1="374" y1="283.5" x2="383" y2="283.5" stroke="#000" stroke-width="1" />
<line x1="374" y1="286.5" x2="383" y2="286.5" stroke="#000" stroke-width="1" />
<text x="338" y="293" text-anchor="middle" dominant-baseline="central" font-size="8.6" fill="#666" textLength="7.7" lengthAdjust="spacingAndGlyphs">12</text>
<line x1="292.5" y1="254.5" x2="384.5" y2="254.5" stroke="#000" stroke-width="1" />
<line x1="384.5" y1="254.5" x2="384.5" y2="309.5" stroke="#1a8a1a" stroke-width="1" />
<rect x="395.5" y="254.5" width="39" height="30" fill="none" stroke="#8b008b" stroke-width="1" />
<line x1="395.5" y1="284.5" x2="434.5" y2="254.5" stroke="#8b008b" stroke-width="1" />
<line x1="395.5" y1="254.5" x2="434.5" y2="284.5" stroke="#8b008b" stroke-width="1" />
<circle cx="416" cy="268" r="10" fill="none" stroke="#00009a" stroke-width="1" />
<line x1="415.5" y1="257" x2="415.5" y2="280" stroke="#00009a" stroke-width="1" />
<line x1="417.5" y1="257" x2="417.5" y2="280" stroke="#00009a" stroke-width="1" />
<line x1="397" y1="294" x2="434" y2="284.5" stroke="#8b008b" stroke-width="1" />
<rect x="384.5" y="284.5" width="12" height="4.5" fill="none" stroke="#000" stroke-width="1" />
<line x1="434.5" y1="254.5" x2="434.5" y2="309.5" stroke="#1a8a1a" stroke-width="1" stroke-dasharray="3,2"/>
<rect x="435.5" y="254.5" width="98" height="30" fill="none" stroke="#000" stroke-width="1" />
<line x1="435.5" y1="284.5" x2="533.5" y2="254.5" stroke="#000" stroke-width="1" />
<line x1="435.5" y1="254.5" x2="533.5" y2="284.5" stroke="#000" stroke-width="1" />
<text x="484" y="270" text-anchor="middle" dominant-baseline="central" font-size="8.6" fill="#666" textLength="7.7" lengthAdjust="spacingAndGlyphs">15</text>
<text x="484" y="278" text-anchor="middle" dominant-baseline="central" font-size="8.6" fill="#666" textLength="7.7" lengthAdjust="spacingAndGlyphs">14</text>
<ellipse cx="519" cy="279" rx="8" ry="5" fill="none" stroke="#00009a"/>
<line x1="134.5" y1="458.5" x2="189.5" y2="458.5" stroke="#8b0000" stroke-width="1" />
<polyline points="135,459.5 189.5,459.5 189.5,558.5 135,558.5" fill="none" stroke="#1a8a1a" stroke-width="1" />
<polyline points="189.5,459.5 201.5,508.5 189.5,558.5" fill="none" stroke="#1a8a1a" stroke-width="1" />
<text x="0" y="0" transform="translate(182.9,509) rotate(-90)" text-anchor="middle" dominant-baseline="central" font-size="8.6" fill="#333" textLength="3.85" lengthAdjust="spacingAndGlyphs">2</text>
<polyline points="135,560.5 189.5,560.5 189.5,678.5 135,678.5" fill="none" stroke="#1a8a1a" stroke-width="1" />
<line x1="135" y1="561" x2="189.5" y2="678.5" stroke="#1a8a1a" stroke-width="1" />
<line x1="135" y1="678.5" x2="189.5" y2="561" stroke="#1a8a1a" stroke-width="1" />
<polyline points="189.5,560.5 204.5,618 189.5,678.5" fill="none" stroke="#1a8a1a" stroke-width="1" />
<text x="0" y="0" transform="translate(182.9,619) rotate(-90)" text-anchor="middle" dominant-baseline="central" font-size="8.6" fill="#333" textLength="3.85" lengthAdjust="spacingAndGlyphs">1</text>
<circle cx="232" cy="392" r="3" fill="none" stroke="#ff00ff" stroke-width="1"  style="shape-rendering:auto"/>
<circle cx="232" cy="490" r="3" fill="none" stroke="#ff00ff" stroke-width="1"  style="shape-rendering:auto"/>
<circle cx="232" cy="588" r="3" fill="none" stroke="#ff00ff" stroke-width="1"  style="shape-rendering:auto"/>
<circle cx="232" cy="686" r="3" fill="none" stroke="#ff00ff" stroke-width="1"  style="shape-rendering:auto"/>
<circle cx="232" cy="784" r="3" fill="none" stroke="#ff00ff" stroke-width="1"  style="shape-rendering:auto"/>
<circle cx="379" cy="392" r="3" fill="none" stroke="#ff00ff" stroke-width="1"  style="shape-rendering:auto"/>
<circle cx="379" cy="490" r="3" fill="none" stroke="#ff00ff" stroke-width="1"  style="shape-rendering:auto"/>
<circle cx="379" cy="588" r="3" fill="none" stroke="#ff00ff" stroke-width="1"  style="shape-rendering:auto"/>
<circle cx="379" cy="686" r="3" fill="none" stroke="#ff00ff" stroke-width="1"  style="shape-rendering:auto"/>
<circle cx="379" cy="784" r="3" fill="none" stroke="#ff00ff" stroke-width="1"  style="shape-rendering:auto"/>
<circle cx="527" cy="392" r="3" fill="none" stroke="#ff00ff" stroke-width="1"  style="shape-rendering:auto"/>
<circle cx="527" cy="490" r="3" fill="none" stroke="#ff00ff" stroke-width="1"  style="shape-rendering:auto"/>
<circle cx="527" cy="588" r="3" fill="none" stroke="#ff00ff" stroke-width="1"  style="shape-rendering:auto"/>
<circle cx="527" cy="686" r="3" fill="none" stroke="#ff00ff" stroke-width="1"  style="shape-rendering:auto"/>
<circle cx="527" cy="784" r="3" fill="none" stroke="#ff00ff" stroke-width="1"  style="shape-rendering:auto"/>
<rect x="334.5" y="460.5" width="110" height="98" fill="none" stroke="#1a8a1a" stroke-width="1" />
<line x1="389.5" y1="460.5" x2="389.5" y2="497.5" stroke="#1a8a1a" stroke-width="1" />
<line x1="389.5" y1="497.5" x2="389.5" y2="558.5" stroke="#1a8a1a" stroke-width="1" stroke-dasharray="3,2"/>
<polyline points="334.5,460.5 321.5,507 334.5,558.5" fill="none" stroke="#1a8a1a" stroke-width="1" />
<polyline points="444.5,460.5 456.5,507 444.5,558.5" fill="none" stroke="#1a8a1a" stroke-width="1" />
<rect x="334.5" y="558.5" width="88" height="22" fill="none" stroke="#1a8a1a" stroke-width="1" />
<text x="0" y="0" transform="translate(339.4,507) rotate(-90)" text-anchor="middle" dominant-baseline="central" font-size="8.6" fill="#222" textLength="7.7" lengthAdjust="spacingAndGlyphs">18</text>
<text x="0" y="0" transform="translate(437.4,507) rotate(-90)" text-anchor="middle" dominant-baseline="central" font-size="8.6" fill="#222" textLength="7.7" lengthAdjust="spacingAndGlyphs">16</text>
<text x="0" y="0" transform="translate(338.9,569) rotate(-90)" text-anchor="middle" dominant-baseline="central" font-size="8.6" fill="#222" textLength="7.7" lengthAdjust="spacingAndGlyphs">17</text>
<polygon points="360.78,572.64 355.64,577.78 348.36,577.78 343.22,572.64 343.22,565.36 348.36,560.22 355.64,560.22 360.78,565.36" fill="none" stroke="#000" stroke-width="1" />
<circle cx="352" cy="569" r="6" fill="none" stroke="#000" stroke-width="1" />
<rect x="369.5" y="497.5" width="59" height="44" fill="none" stroke="#00009a" stroke-width="1" />
<circle cx="370.5" cy="485" r="14.5" fill="none" stroke="#00009a" stroke-width="1" />
<circle cx="363" cy="500" r="11" fill="none" stroke="#ff00ff" stroke-width="1" />
<circle cx="363" cy="500" r="4" fill="none" stroke="#ff00ff" stroke-width="1"  style="shape-rendering:auto"/>
<circle cx="379" cy="489" r="3" fill="none" stroke="#ff00ff" stroke-width="1"  style="shape-rendering:auto"/>
<rect x="376" y="503" width="30" height="10" transform="rotate(20 391 508)" fill="none" stroke="#00009a"/>
<rect x="372" y="521" width="26" height="9" transform="rotate(-15 385 525)" fill="none" stroke="#00009a"/>
<circle cx="379" cy="514" r="6" fill="none" stroke="#00009a" stroke-width="1" />
<rect x="418" y="508" width="2.5" height="29" rx="1" transform="rotate(22 419 522)" fill="none" stroke="#00009a" stroke-width="0.9"/>
<circle cx="380" cy="548" r="3.8" fill="none" stroke="#00009a" stroke-width="1"  style="shape-rendering:auto"/>
<circle cx="389" cy="548" r="3.8" fill="none" stroke="#00009a" stroke-width="1"  style="shape-rendering:auto"/>
<circle cx="370" cy="558" r="3.8" fill="none" stroke="#00009a" stroke-width="1"  style="shape-rendering:auto"/>
<circle cx="380" cy="558" r="3.8" fill="none" stroke="#00009a" stroke-width="1"  style="shape-rendering:auto"/>
<path d="M454.5,460.5 Q455,457.5 459,457.5 L472,457.5 Q487.5,459.5 487.5,478.5 Q487.5,497.5 474,499.5 L457.5,499.5 Q454.5,497 454.5,495 L454.5,483 L455.5,482 L455.5,475 L454.5,474 Z" fill="none" stroke="#8b0000"/>
<path d="M454.5,519.5 Q455,516.5 459,516.5 L472,516.5 Q487.5,518.5 487.5,537.5 Q487.5,556.5 474,558.5 L457.5,558.5 Q454.5,556 454.5,554 L454.5,542 L455.5,541 L455.5,534 L454.5,533 Z" fill="none" stroke="#8b0000"/>
<path d="M93.5,250.5 L116.5,250.5 L113.5,244 L134,254.2 L113.5,265 L116.5,257.5 L93.5,257.5 Z" fill="#008000" stroke="#000" stroke-width="1"/>
<line x1="104.5" y1="251" x2="104.5" y2="257" stroke="#ff80ff" stroke-width="1" />
</g>
<rect x="948" y="68" width="97" height="423" fill="#b1b4a9" stroke="none" stroke-width="1" />
<path d="M1000,68 Q1022,250 1013,380 Q1008,440 999,491 L1045,491 L1045,68 Z" fill="#aeb1a6"/>
<path d="M1041,68 L1045,68 L1045,82 Z" fill="#9c9f98"/>
<path d="M950,448 Q951,443 955,442 Q960,442 961,449 L950.5,454 Z" fill="#9fabac" stroke="#8a9494" stroke-width="0.7"/>
<path d="M952.5,458 L963,454 Q969,458 971,467 Q972,480 967,482 Q960,482 956,474 Q952,465 952.5,458 Z" fill="#9fabac" stroke="#8a9494" stroke-width="0.7"/>
<path d="M971.5,454 Q972,449 977,448 Q983,449 986,454 L975,460 Z" fill="#9fabac" stroke="#8a9494" stroke-width="0.7"/>
<path d="M977,463 L987,458 Q996,465 999,473 Q1000,484 994,486 Q986,485 981,477 Q977,470 977,463 Z" fill="#9fabac" stroke="#8a9494" stroke-width="0.7"/>
<path d="M957,458 L967,480 M981,462 L993,484" stroke="#a6a9a9" stroke-width="2.5" fill="none"/>
<line x1="948" y1="118" x2="977.5" y2="491" stroke="#6a6d66" stroke-width="0.8" />
<line x1="991.5" y1="607.5" x2="1045" y2="607.5" stroke="#f00" stroke-width="1" />
<line x1="991.5" y1="604" x2="991.5" y2="611" stroke="#f00" stroke-width="1" />
<line x1="991.5" y1="624.5" x2="1045" y2="624.5" stroke="#f00" stroke-width="1" />
<line x1="991.5" y1="621" x2="991.5" y2="628" stroke="#f00" stroke-width="1" />
<line x1="1000.5" y1="621" x2="1000.5" y2="628" stroke="#f00" stroke-width="1" />
<text x="995.5" y="627.5" text-anchor="middle" dominant-baseline="central" font-size="7.8" fill="#222" textLength="10.8" lengthAdjust="spacingAndGlyphs">100</text>
<text x="1043" y="627.5" text-anchor="middle" dominant-baseline="central" font-size="7.8" fill="#222" textLength="10.8" lengthAdjust="spacingAndGlyphs">100</text>
<line x1="991.5" y1="873.5" x2="1045" y2="873.5" stroke="#f00" stroke-width="1" />
<line x1="991.5" y1="870" x2="991.5" y2="877" stroke="#f00" stroke-width="1" />
<line x1="1000.5" y1="870" x2="1000.5" y2="877" stroke="#f00" stroke-width="1" />
<text x="995.5" y="876.5" text-anchor="middle" dominant-baseline="central" font-size="7.8" fill="#222" textLength="10.8" lengthAdjust="spacingAndGlyphs">100</text>
<text x="1043" y="876.5" text-anchor="middle" dominant-baseline="central" font-size="7.8" fill="#222" textLength="10.8" lengthAdjust="spacingAndGlyphs">100</text>
<line x1="960.5" y1="640.5" x2="960.5" y2="858.5" stroke="#f00" stroke-width="1" />
<line x1="957" y1="640.5" x2="964" y2="640.5" stroke="#f00" stroke-width="1" />
<line x1="957" y1="858.5" x2="964" y2="858.5" stroke="#f00" stroke-width="1" />
<text x="0" y="0" transform="translate(963.9,747.5) rotate(-90)" text-anchor="middle" dominant-baseline="central" font-size="7.8" fill="#222" textLength="14.4" lengthAdjust="spacingAndGlyphs">2400</text>
<line x1="973.5" y1="640.5" x2="973.5" y2="858.5" stroke="#f00" stroke-width="1" />
<line x1="970" y1="858.5" x2="977" y2="858.5" stroke="#f00" stroke-width="1" />
<path d="M970,640.5 L977,640.5 M971.5,642.5 L973.5,639.0 L975.5,642.5 Z" stroke="#f00" fill="#f00" stroke-width="1"/>
<path d="M970,666.5 L977,666.5 M971.5,668.5 L973.5,665.0 L975.5,668.5 Z" stroke="#f00" fill="#f00" stroke-width="1"/>
<path d="M970,699 L977,699 M971.5,701 L973.5,697.5 L975.5,701 Z" stroke="#f00" fill="#f00" stroke-width="1"/>
<path d="M970,732.5 L977,732.5 M971.5,734.5 L973.5,731.0 L975.5,734.5 Z" stroke="#f00" fill="#f00" stroke-width="1"/>
<path d="M970,776 L977,776 M971.5,778 L973.5,774.5 L975.5,778 Z" stroke="#f00" fill="#f00" stroke-width="1"/>
<path d="M970,846 L977,846 M971.5,848 L973.5,844.5 L975.5,848 Z" stroke="#f00" fill="#f00" stroke-width="1"/>
<text x="0" y="0" transform="translate(977.9,639) rotate(-90)" text-anchor="middle" dominant-baseline="central" font-size="7.8" fill="#222" textLength="14.4" lengthAdjust="spacingAndGlyphs">2400</text>
<text x="0" y="0" transform="translate(977.9,665) rotate(-90)" text-anchor="middle" dominant-baseline="central" font-size="7.8" fill="#222" textLength="14.4" lengthAdjust="spacingAndGlyphs">2115</text>
<text x="0" y="0" transform="translate(977.9,697.5) rotate(-90)" text-anchor="middle" dominant-baseline="central" font-size="7.8" fill="#222" textLength="14.4" lengthAdjust="spacingAndGlyphs">1755</text>
<text x="0" y="0" transform="translate(977.9,730) rotate(-90)" text-anchor="middle" dominant-baseline="central" font-size="7.8" fill="#222" textLength="14.4" lengthAdjust="spacingAndGlyphs">1395</text>
<text x="0" y="0" transform="translate(977.9,775) rotate(-90)" text-anchor="middle" dominant-baseline="central" font-size="7.8" fill="#222" textLength="10.8" lengthAdjust="spacingAndGlyphs">910</text>
<text x="0" y="0" transform="translate(977.9,844.5) rotate(-90)" text-anchor="middle" dominant-baseline="central" font-size="7.8" fill="#222" textLength="10.8" lengthAdjust="spacingAndGlyphs">150</text>
<rect x="991.5" y="639.5" width="60" height="219" fill="#fff" stroke="#000" stroke-width="1" />
<line x1="992" y1="647.5" x2="1045" y2="647.5" stroke="#999" stroke-width="1" />
<path d="M992,648 Q993,641 1000,640" fill="none" stroke="#888" stroke-width="0.8"/>
<rect x="992" y="663.5" width="53" height="68" fill="#d6d9cc" stroke="none" stroke-width="1" />
<line x1="992" y1="665.5" x2="1000" y2="665.5" stroke="#777" stroke-width="1" />
<line x1="991.5" y1="639.5" x2="991.5" y2="858.5" stroke="#000" stroke-width="1" />
<rect x="1000.5" y="665.5" width="50" height="32.5" fill="#d6d9cc" stroke="#000" stroke-width="1" />
<rect x="1007.5" y="672.5" width="45" height="18.5" fill="#d6d9cc" stroke="#555" stroke-width="1" />
<line x1="1040" y1="694" x2="1045" y2="694" stroke="#aaa" stroke-width="1" />
<rect x="1000.5" y="698" width="50" height="33" fill="#d6d9cc" stroke="#000" stroke-width="1" />
<rect x="1007.5" y="705" width="45" height="19" fill="#d6d9cc" stroke="#555" stroke-width="1" />
<line x1="1040" y1="727" x2="1045" y2="727" stroke="#aaa" stroke-width="1" />
<line x1="992" y1="731.5" x2="1045" y2="731.5" stroke="#000" stroke-width="1" />
<rect x="992" y="732" width="53" height="2" fill="#bfc2b7" stroke="none" stroke-width="1" />
<rect x="992" y="766.5" width="53" height="9" fill="#c89466" stroke="none" stroke-width="1" />
<rect x="992" y="766.5" width="14" height="9" fill="#b5835a" stroke="none" stroke-width="1" />
<line x1="992" y1="775.5" x2="1045" y2="775.5" stroke="#000" stroke-width="1" />
<rect x="992" y="776" width="53" height="3" fill="#dca26d" stroke="none" stroke-width="1" />
<rect x="1005" y="749" width="8" height="27" fill="#fff" stroke="none" stroke-width="1" fill-opacity="0.55"/>
<path d="M1006,753 L1012,753 Q1010,762 1012,775 L1006,775 Q1008,762 1006,753 Z" fill="#efbf55" fill-opacity="0.9"/>
<rect x="1013" y="749" width="10" height="27" fill="#f3f0ea" stroke="#e6e0d6" stroke-width="0.5" fill-opacity="0.6"/>
<line x1="1005" y1="749.5" x2="1023" y2="749.5" stroke="#222" stroke-width="1.2" />
<rect x="992" y="779" width="53" height="79" fill="#d6d9cc" stroke="none" stroke-width="1" />
<line x1="991.5" y1="779" x2="1045" y2="779" stroke="#000" stroke-width="0.6" />
<rect x="1000.5" y="779.5" width="50" height="32.5" fill="#d6d9cc" stroke="#000" stroke-width="1" />
<rect x="1007.5" y="786.5" width="45" height="18.5" fill="#d6d9cc" stroke="#555" stroke-width="1" />
<line x1="1040" y1="782.5" x2="1045" y2="782.5" stroke="#222" stroke-width="1.2" />
<rect x="1000.5" y="812" width="50" height="33.5" fill="#d6d9cc" stroke="#000" stroke-width="1" />
<rect x="1007.5" y="819" width="45" height="19.5" fill="#d6d9cc" stroke="#555" stroke-width="1" />
<line x1="1040" y1="815" x2="1045" y2="815" stroke="#222" stroke-width="1.2" />
<line x1="1000.5" y1="779" x2="1000.5" y2="858" stroke="#000" stroke-width="1" />
<line x1="992" y1="858.5" x2="1045" y2="858.5" stroke="#000" stroke-width="1" />
</svg>
</body></html>
